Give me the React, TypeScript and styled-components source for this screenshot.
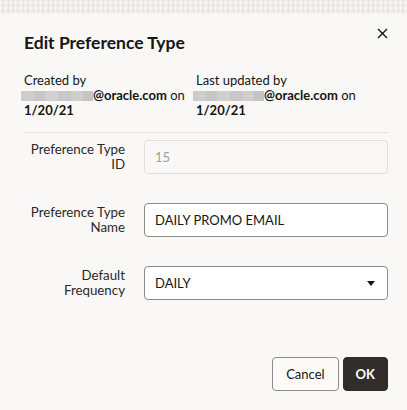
import React from "react";
import styled, { createGlobalStyle } from "styled-components";

const Global = createGlobalStyle`
  html, body { margin: 0; padding: 0; background: #f9f8f6; }
  body { font-family: Lato, "Noto Sans", sans-serif; color: #161513; }
  * { box-sizing: border-box; }
`;

const Page = styled.div`
  width: 407px;
  height: 410px;
  display: flex;
  flex-direction: column;
  overflow: hidden;
`;

const Backdrop = styled.div`
  height: 14px;
  flex: none;
  background-color: #ebeae8;
  background-image:
    repeating-linear-gradient(90deg, rgba(255,255,255,0.55) 0 1px, transparent 1px 3px, rgba(0,0,0,0.03) 3px 4px, transparent 4px 5px),
    repeating-linear-gradient(0deg, rgba(255,255,255,0.35) 0 2px, transparent 2px 5px);
`;

const Dialog = styled.div`
  flex: 1;
  background: #f9f8f6;
  padding: 7px 19px 19px 24px;
  display: flex;
  flex-direction: column;
`;

const Header = styled.div`
  display: flex;
  justify-content: space-between;
  align-items: flex-start;
`;

const Title = styled.h1`
  margin: 12px 0 0;
  font-size: 17.5px;
  line-height: 20px;
  font-weight: 700;
  color: #161513;
`;

const Close = styled.button`
  border: none;
  background: none;
  padding: 0;
  width: 12px;
  height: 12px;
  margin-top: 6px;
  display: flex;
  align-items: center;
  justify-content: center;
  cursor: pointer;
`;

const Meta = styled.div`
  display: grid;
  grid-template-columns: 172px 1fr;
  margin-top: 20px;
  padding-bottom: 14px;
  border-bottom: 1px solid #e4e2df;
  width: 364px;
`;

const MetaBlock = styled.div`
  font-size: 13px;
  line-height: 15px;
  color: #161513;
`;

const MetaLine = styled.div`
  white-space: nowrap;
`;

const Redacted = styled.span<{ $w: number }>`
  display: inline-block;
  vertical-align: -1px;
  width: ${(p) => p.$w}px;
  height: 10px;
  margin-left: -3px;
  background: linear-gradient(90deg, #cdcdcd 0 18%, #c6c6c6 18% 34%, #d0d0d0 34% 52%, #c8c8c8 52% 70%, #cecece 70% 86%, #c4c4c4 86% 100%);
`;

const Strong = styled.b`
  font-weight: 700;
`;

const Form = styled.div`
  display: grid;
  grid-template-columns: 101px 1fr;
  column-gap: 19px;
  row-gap: 29px;
  margin-top: 7px;
  width: 364px;
`;

const Label = styled.label`
  text-align: right;
  font-size: 13.3px;
  line-height: 15px;
  padding-top: 2px;
  color: #2b2926;
`;

const Field = styled.div<{ $disabled?: boolean }>`
  height: 34px;
  border: 1px solid ${(p) => (p.$disabled ? "#e1dfdc" : "#8f8c88")};
  border-radius: 4px;
  background: ${(p) => (p.$disabled ? "#f9f8f6" : "#ffffff")};
  display: flex;
  align-items: center;
  justify-content: space-between;
  padding: 0 11px 0 10px;
  font-size: 13px;
  color: ${(p) => (p.$disabled ? "#a3a09c" : "#161513")};
`;

const Caret = styled.span`
  width: 0;
  height: 0;
  border-left: 4px solid transparent;
  border-right: 4px solid transparent;
  border-top: 5px solid #161513;
  margin-right: 1px;
`;

const Footer = styled.div`
  margin-top: auto;
  display: flex;
  justify-content: flex-end;
  gap: 4px;
  width: 364px;
`;

const Button = styled.button<{ $primary?: boolean }>`
  height: 34px;
  padding: 0 ${(p) => (p.$primary ? 12 : 13)}px;
  border-radius: 4px;
  font-family: Lato, "Noto Sans", sans-serif;
  font-size: 13px;
  font-weight: ${(p) => (p.$primary ? 700 : 400)};
  border: 1px solid ${(p) => (p.$primary ? "#312d2a" : "#8f8c88")};
  background: ${(p) => (p.$primary ? "#312d2a" : "#fbfaf9")};
  color: ${(p) => (p.$primary ? "#ffffff" : "#161513")};
  cursor: pointer;
`;

export default function App() {
  return (
    <>
      <Global />
      <Page>
        <Backdrop />
        <Dialog>
          <Header>
            <Title>Edit Preference Type</Title>
            <Close aria-label="Close">
              <svg width="11" height="11" viewBox="0 0 11 11">
                <path d="M1 1 L10 10 M10 1 L1 10" stroke="#161513" strokeWidth="1.4" />
              </svg>
            </Close>
          </Header>
          <Meta>
            <MetaBlock>
              <MetaLine>Created by</MetaLine>
              <MetaLine>
                <Redacted $w={72} />
                <Strong>@oracle.com</Strong> on
              </MetaLine>
              <MetaLine>
                <Strong>1/20/21</Strong>
              </MetaLine>
            </MetaBlock>
            <MetaBlock>
              <MetaLine>Last updated by</MetaLine>
              <MetaLine>
                <Redacted $w={71} />
                <Strong>@oracle.com</Strong> on
              </MetaLine>
              <MetaLine>
                <Strong>1/20/21</Strong>
              </MetaLine>
            </MetaBlock>
          </Meta>
          <Form>
            <Label>Preference Type ID</Label>
            <Field $disabled>15</Field>
            <Label>Preference Type Name</Label>
            <Field>DAILY PROMO EMAIL</Field>
            <Label>Default Frequency</Label>
            <Field>
              DAILY
              <Caret />
            </Field>
          </Form>
          <Footer>
            <Button>Cancel</Button>
            <Button $primary>OK</Button>
          </Footer>
        </Dialog>
      </Page>
    </>
  );
}
